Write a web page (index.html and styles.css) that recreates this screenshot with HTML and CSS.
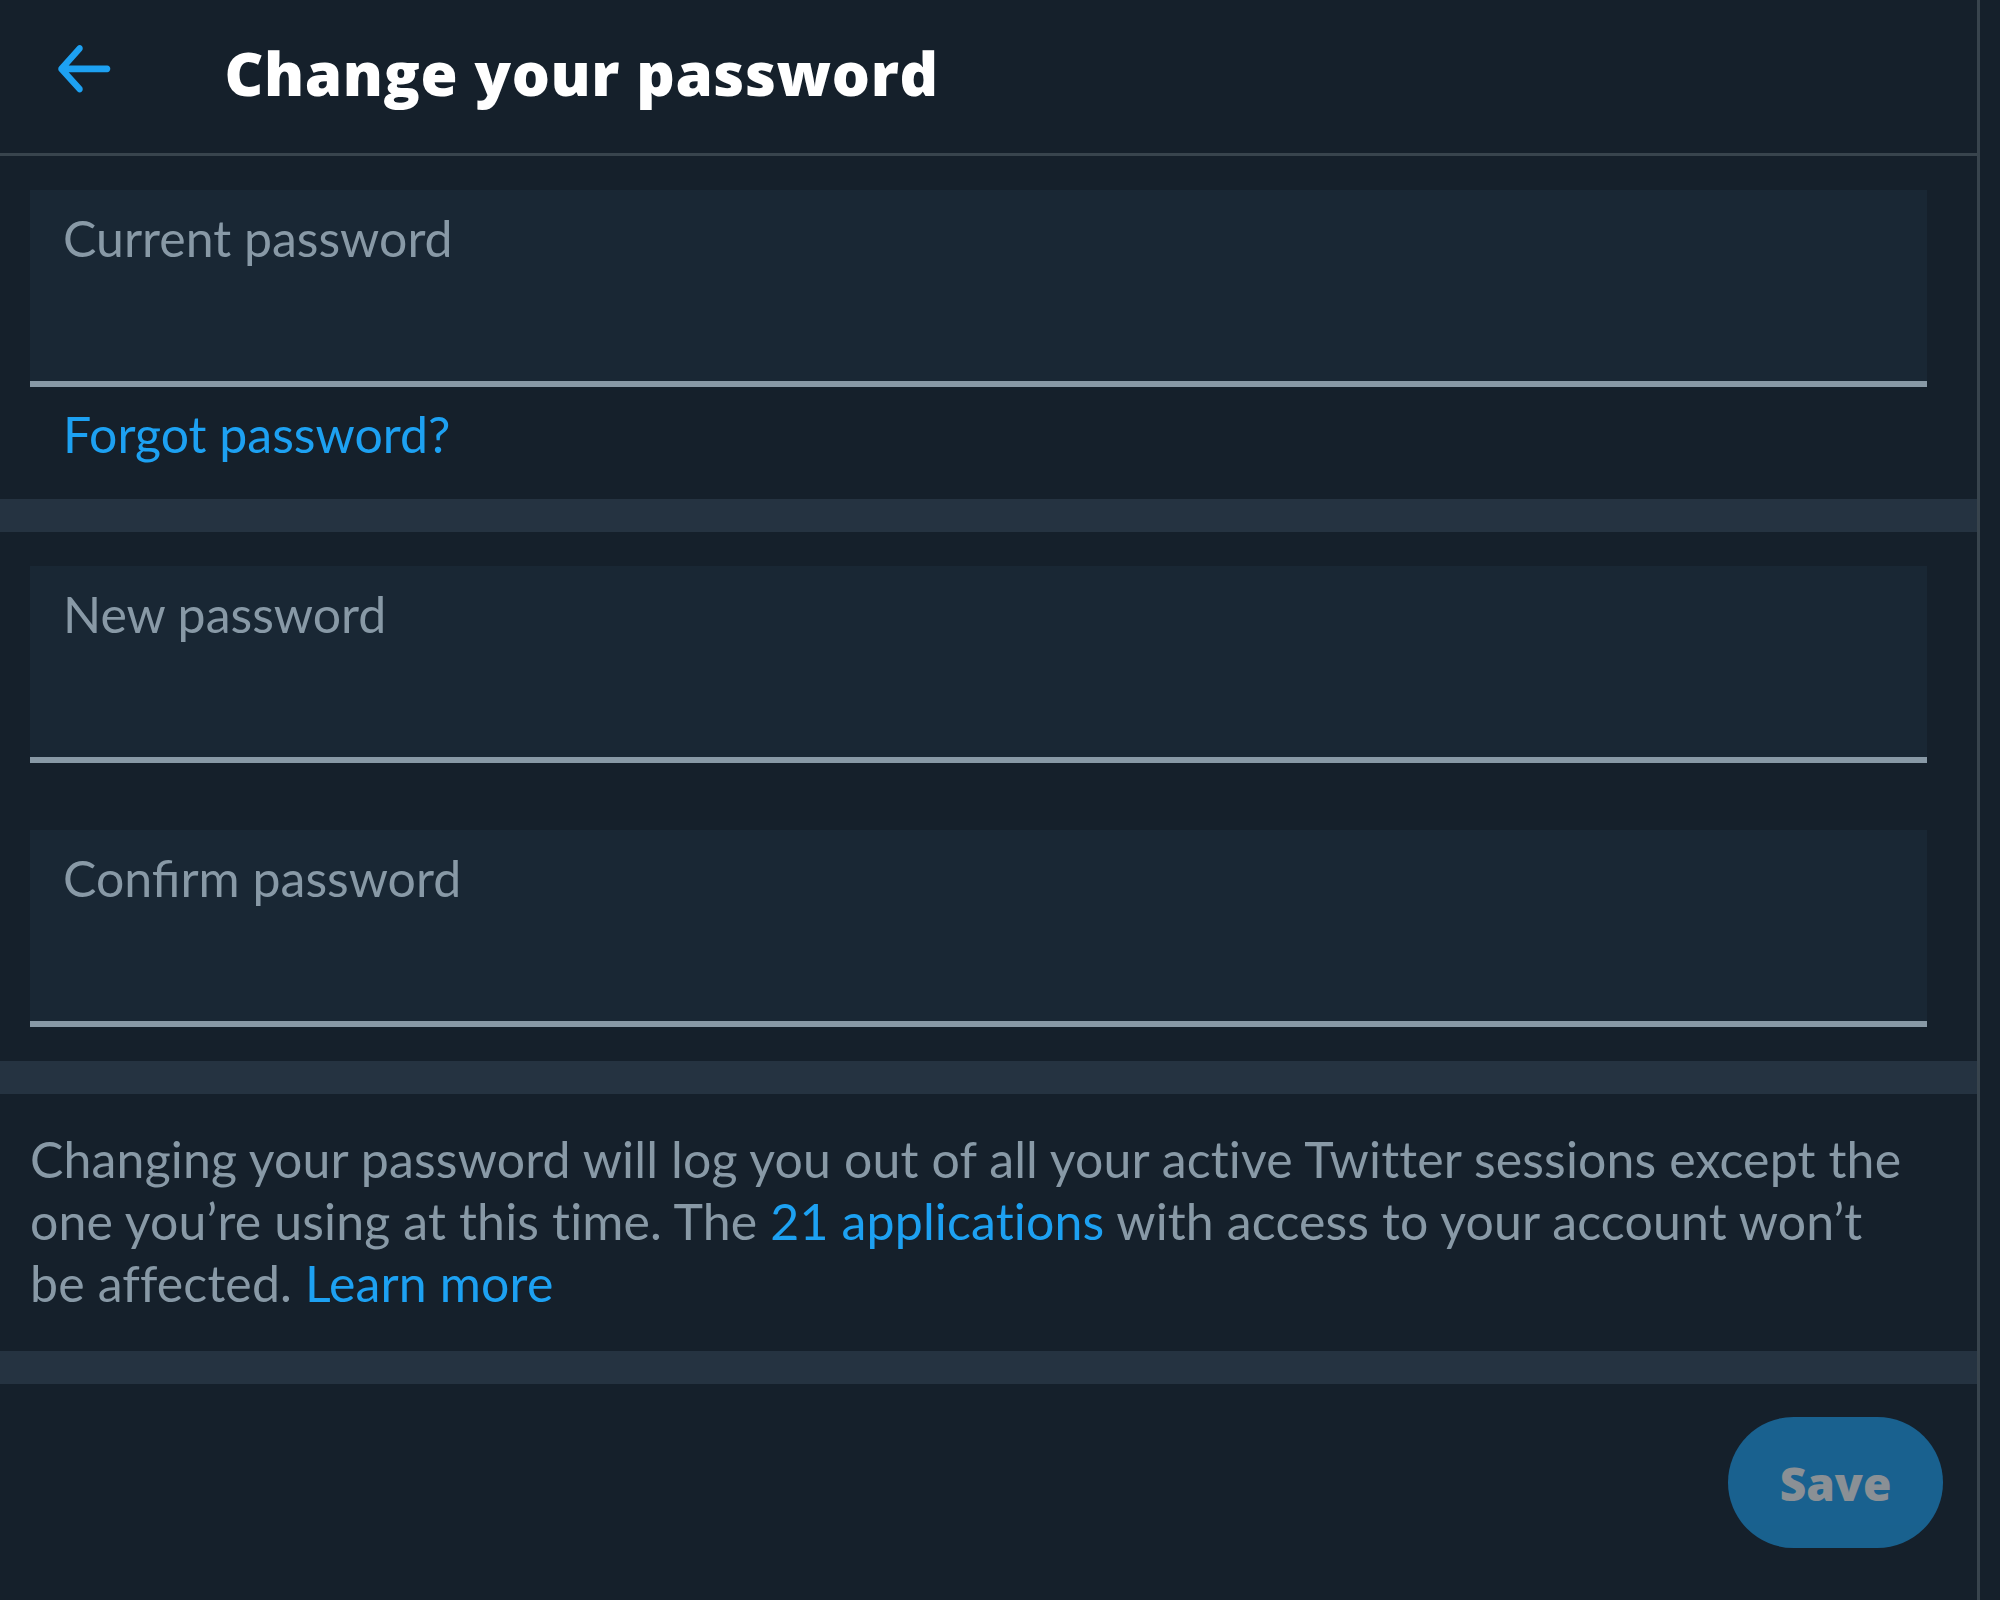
FILE: index.html
```html
<!DOCTYPE html>
<html lang="en">
<head>
<meta charset="utf-8">
<title>Change your password</title>
<link rel="stylesheet" href="styles.css">
</head>
<body>
<div class="page">
  <header class="topbar">
    <svg class="back" viewBox="0 0 24 24" preserveAspectRatio="none" aria-hidden="true"><path d="M20 11H7.414l4.293-4.293c.39-.39.39-1.023 0-1.414s-1.023-.39-1.414 0l-6 6c-.39.39-.39 1.023 0 1.414l6 6c.195.195.45.293.707.293s.512-.098.707-.293c.39-.39.39-1.023 0-1.414L7.414 13H20c.553 0 1-.447 1-1s-.447-1-1-1z"/></svg>
    <h1 class="title">Change your password</h1>
  </header>

  <section class="group">
    <div class="field"><span class="field-label">Current password</span></div>
    <a class="forgot" href="#">Forgot password?</a>
  </section>

  <div class="divider"></div>

  <section class="group">
    <div class="field"><span class="field-label">New password</span></div>
    <div class="field"><span class="field-label">Confirm password</span></div>
  </section>

  <div class="divider"></div>

  <section class="notice">
    <p>Changing your password will log you out of all your active Twitter sessions except the one you’re using at this time. The <a href="#">21 applications</a> with access to your account won’t be affected. <a href="#">Learn more</a></p>
  </section>

  <div class="divider"></div>

  <section class="actions">
    <button class="save" type="button">Save</button>
  </section>
</div>
</body>
</html>
```
FILE: styles.css
```css
html, body {
  margin: 0;
  padding: 0;
  background: #15202b;
}

body {
  font-family: Lato, "Noto Sans", sans-serif;
}

.page {
  width: 1980px;
  min-height: 1600px;
  box-sizing: border-box;
  border-right: 3px solid #38444d;
}

.topbar {
  height: 156px;
  box-sizing: border-box;
  border-bottom: 3px solid #38444d;
  display: flex;
  align-items: flex-start;
}

.back {
  flex: none;
  width: 73.5px;
  height: 81.6px;
  margin: 28px 0 0 46px;
  fill: #1da1f2;
}

.title {
  margin: 32px 0 0 105px;
  font-family: "Open Sans", Lato, sans-serif;
  font-size: 60px;
  font-weight: 800;
  line-height: normal;
  letter-spacing: 0.6px;
  color: #ffffff;
}

.group {
  padding: 34px 0;
}

.field {
  box-sizing: border-box;
  height: 197px;
  margin: 0 50px 0 30px;
  padding: 17px 33px 0;
  background: #192734;
  border-bottom: 6px solid #8899a6;
}

.field + .field {
  margin-top: 67px;
}

.field-label {
  display: block;
  font-size: 50px;
  line-height: 62px;
  color: #8899a6;
}

.forgot {
  display: block;
  margin: 16px 0 0 63px;
  font-size: 50px;
  line-height: 62px;
  color: #1da1f2;
  text-decoration: none;
}

.divider {
  height: 33px;
  background: #253341;
}

.notice {
  padding: 34px 65px 37px 30px;
}

.notice p {
  margin: 0;
  font-size: 50px;
  line-height: 62px;
  letter-spacing: 0.15px;
  color: #8899a6;
}

.notice a {
  color: #1da1f2;
  text-decoration: none;
}

.actions {
  display: flex;
  justify-content: flex-end;
  padding: 33px 34px 0 0;
}

.save {
  width: 215px;
  height: 131px;
  padding: 0;
  border: 0;
  border-radius: 66px;
  background: #1da1f2;
  opacity: 0.5;
  color: #ffffff;
  font-family: "Open Sans", Lato, sans-serif;
  font-size: 46px;
  font-weight: 800;
}
```
